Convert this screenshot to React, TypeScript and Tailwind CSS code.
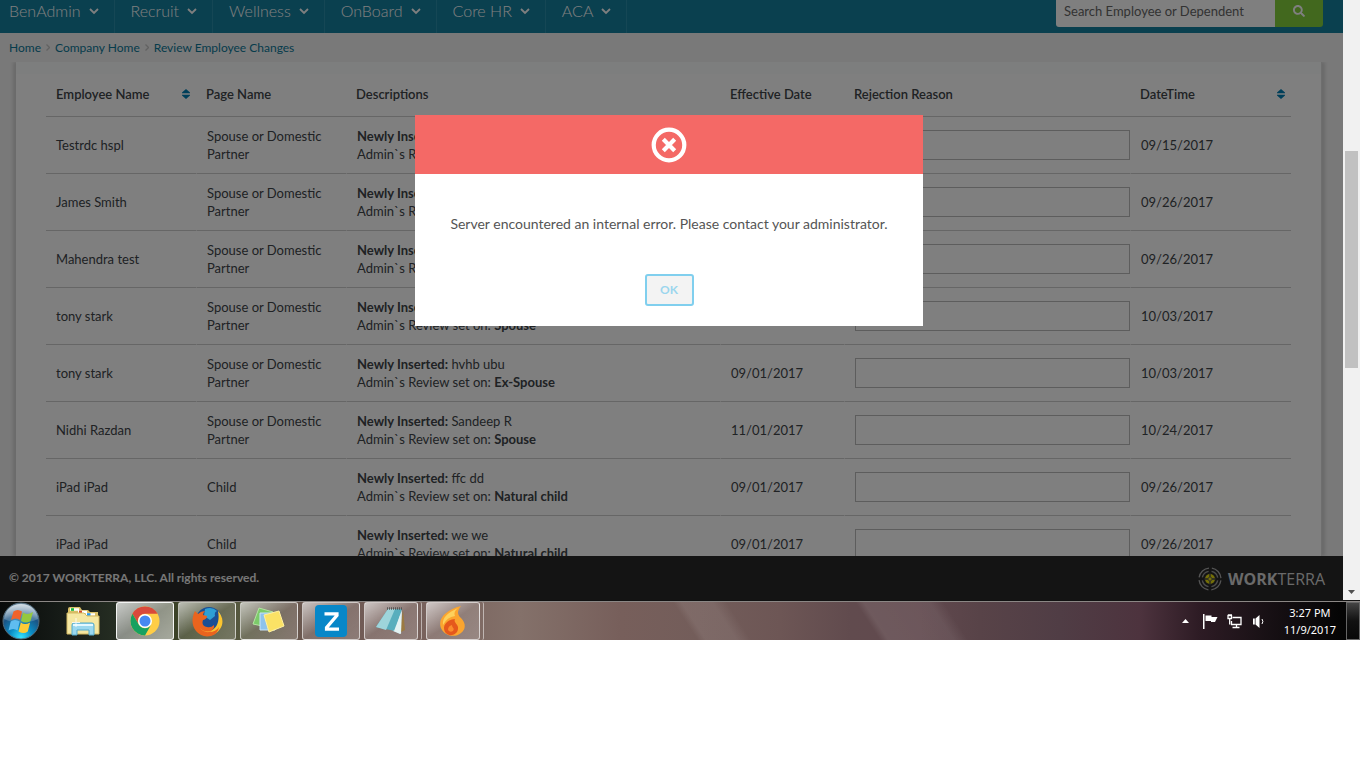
import React from "react";
import { FaSearch } from "react-icons/fa";

const NAV = ["BenAdmin", "Recruit", "Wellness", "OnBoard", "Core HR", "ACA"];

type Row = { name: string; page: string; item: string; relation: string; effective: string; date: string };

const SPOUSE = "Spouse or Domestic Partner";

const ROWS: Row[] = [
  { name: "Testrdc hspl", page: SPOUSE, item: "", relation: "Spouse", effective: "", date: "09/15/2017" },
  { name: "James Smith", page: SPOUSE, item: "", relation: "Spouse", effective: "", date: "09/26/2017" },
  { name: "Mahendra test", page: SPOUSE, item: "", relation: "Spouse", effective: "", date: "09/26/2017" },
  { name: "tony stark", page: SPOUSE, item: "", relation: "Spouse", effective: "", date: "10/03/2017" },
  { name: "tony stark", page: SPOUSE, item: "hvhb ubu", relation: "Ex-Spouse", effective: "09/01/2017", date: "10/03/2017" },
  { name: "Nidhi Razdan", page: SPOUSE, item: "Sandeep R", relation: "Spouse", effective: "11/01/2017", date: "10/24/2017" },
  { name: "iPad iPad", page: "Child", item: "ffc dd", relation: "Natural child", effective: "09/01/2017", date: "09/26/2017" },
  { name: "iPad iPad", page: "Child", item: "we we", relation: "Natural child", effective: "09/01/2017", date: "09/26/2017" },
];

function Chevron() {
  return (
    <svg className="mt-[2px]" width="10" height="7" viewBox="0 0 10 7" fill="none" stroke="currentColor" strokeWidth="1.8">
      <path d="M1 1l4 4 4-4" />
    </svg>
  );
}

function SortIcon() {
  return (
    <svg width="8" height="10" viewBox="0 0 8 10" fill="#007fb4">
      <path d="M4 0L8 3.400V4.300H0V3.400zM4 10L8 6.600V5.700H0V6.600z" />
    </svg>
  );
}

function Header() {
  return (
    <header className="flex h-[33px] justify-between bg-[#14809e] pr-5">
      <nav className="-ml-[7px] flex text-[16px] font-light text-white">
        {NAV.map((label) => (
          <a key={label} href="#" className="flex items-center gap-2 border-r border-[#2b8eaa] pr-[15px] pb-3 pl-4 leading-5">
            {label}
            <Chevron />
          </a>
        ))}
      </nav>
      <form className="flex h-[27px] overflow-hidden rounded-b-[3px]">
        <input
          aria-label="Search Employee or Dependent"
          placeholder="Search Employee or Dependent"
          className="w-[219px] bg-white px-2 pb-1 text-[13px] text-[#555] placeholder:text-[#666]"
        />
        <button type="button" aria-label="Search" className="flex w-12 items-center justify-center bg-[#84d03c] pb-[5px] text-white">
          <FaSearch size={12} />
        </button>
      </form>
    </header>
  );
}

function Breadcrumb() {
  return (
    <nav className="flex h-[29px] items-center gap-[5px] pl-[9px] text-[12px] text-[#0c7898]">
      <a href="#">Home</a>
      <Separator />
      <a href="#">Company Home</a>
      <Separator />
      <a href="#">Review Employee Changes</a>
    </nav>
  );
}

function Separator() {
  return (
    <svg width="4" height="7" viewBox="0 0 4 7" fill="none" stroke="#c4c4c4" strokeWidth="1.300">
      <path d="M.5 .5l3 3-3 3" />
    </svg>
  );
}

function Heading({ label, sortable }: { label: string; sortable?: boolean }) {
  return (
    <th className="h-[43px] border-b border-[#ccc] p-0 pr-[6px] pb-[2px] pl-[10px] text-left align-middle font-semibold">
      <div className="flex items-center justify-between">
        {label}
        {sortable && <SortIcon />}
      </div>
    </th>
  );
}

const CELL = "h-[57px] border-b border-b-[#ccc] border-l border-l-white py-0 pr-0 pl-[10px] align-middle";
const FIRST_CELL = "h-[57px] border-b border-b-[#ccc] py-0 pr-0 pl-[10px] align-middle";

function ChangesTable() {
  return (
    <table className="w-full table-fixed border-separate border-spacing-0 text-[13px] leading-[18px] text-[#404448]">
      <colgroup>
        <col className="w-[150px]" />
        <col className="w-[150px]" />
        <col />
        <col className="w-[124px]" />
        <col className="w-[286px]" />
        <col className="w-[161px]" />
      </colgroup>
      <thead>
        <tr>
          <Heading label="Employee Name" sortable />
          <Heading label="Page Name" />
          <Heading label="Descriptions" />
          <Heading label="Effective Date" />
          <Heading label="Rejection Reason" />
          <Heading label="DateTime" sortable />
        </tr>
      </thead>
      <tbody>
        {ROWS.map((row, i) => (
          <tr key={i}>
            <td className={FIRST_CELL}>{row.name}</td>
            <td className={CELL}>{row.page}</td>
            <td className={CELL}>
              <b className="font-bold">Newly Inserted:</b> {row.item}
              <br />
              Admin`s Review set on: <b className="font-bold">{row.relation}</b>
            </td>
            <td className={CELL}>{row.effective}</td>
            <td className={CELL}>
              <input aria-label={"Rejection reason for " + row.name} className="block h-[30px] w-full border border-[#bbb] bg-white px-2" />
            </td>
            <td className={CELL}>{row.date}</td>
          </tr>
        ))}
      </tbody>
    </table>
  );
}

function Footer() {
  return (
    <footer className="flex h-11 items-center justify-between bg-[#282828] pr-[18px] pl-[9px] text-[#eee]">
      <p className="text-[12px] font-bold">© 2017 WORKTERRA, LLC. All rights reserved.</p>
      <div className="flex items-center gap-[6px] pt-[2px] font-['Open_Sans',sans-serif] text-[16px] text-[#d4d4d4]">
        <svg width="24" height="24" viewBox="0 0 24 24" fill="none">
          <circle cx="12" cy="12" r="11" stroke="#aaa" strokeWidth="1.300" strokeDasharray="14.300 3" strokeDashoffset="-1.500" />
          <circle cx="12" cy="12" r="7.800" stroke="#999" strokeWidth="1.400" strokeDasharray="9.200 3" strokeDashoffset="-1.500" />
          <circle cx="12" cy="12" r="5" fill="#e6dc10" />
          <path d="M12 6v12M6 12h12" stroke="#444" strokeWidth="1.300" />
          <circle cx="12" cy="12" r="2" fill="#e6dc10" stroke="#555" strokeWidth=".8" />
        </svg>
        <span>
          <b className="font-bold">WORK</b>TERRA
        </span>
      </div>
    </footer>
  );
}

function ErrorDialog() {
  return (
    <div className="absolute inset-0 flex items-start justify-center bg-black/50 pt-[115px] pr-[5px]">
      <div role="alertdialog" aria-label="Error" className="w-[508px] bg-white">
        <div className="flex h-[59px] items-center justify-center bg-[#f46966]">
          <svg width="36" height="36" viewBox="0 0 36 36" fill="none" stroke="#fff">
            <circle cx="18" cy="18" r="15.300" strokeWidth="4.200" />
            <path d="M12.300 12.300l11.400 11.400M23.700 12.300L12.300 23.700" strokeWidth="4.200" />
          </svg>
        </div>
        <div className="flex flex-col items-center gap-10 pt-10 pb-5">
          <p className="text-[14px] leading-5 text-[#555]">Server encountered an internal error. Please contact your administrator.</p>
          <button type="button" className="h-8 w-[49px] rounded-[3px] border-2 border-[#80cfee] bg-[#f3f3f3] text-[12px] font-bold text-[#9bd6ee]">
            OK
          </button>
        </div>
      </div>
    </div>
  );
}

function Scrollbar() {
  return (
    <div className="flex w-[17px] shrink-0 flex-col items-center justify-between bg-[#f1f1f1] pt-[151px] pb-[6px]">
      <div className="h-[217px] w-[13px] bg-[#c1c1c1]" />
      <svg width="7" height="4" viewBox="0 0 7 4" fill="#505050">
        <path d="M0 0h7L3.500 4z" />
      </svg>
    </div>
  );
}

function StartOrb() {
  return (
    <svg width="40" height="38" viewBox="0 0 40 38">
      <defs>
        <radialGradient id="orb" cx=".5" cy=".95" r=".9">
          <stop offset="0" stopColor="#35e2ff" />
          <stop offset=".35" stopColor="#0b8cc4" />
          <stop offset=".7" stopColor="#1b5484" />
          <stop offset="1" stopColor="#7f9db4" />
        </radialGradient>
        <linearGradient id="gloss" x2="0" y2="1">
          <stop offset="0" stopColor="#fff" stopOpacity=".65" />
          <stop offset="1" stopColor="#fff" stopOpacity=".12" />
        </linearGradient>
      </defs>
      <circle cx="21" cy="19" r="18" fill="url(#orb)" stroke="#526b7b" />
      <path d="M4 17C5 7 13 2 21 2s16 5 17 15c-11 5-23 5-34 0z" fill="url(#gloss)" />
      <path d="M13.500 9.500q4-3 8.500 0l-2 8.500q-4-3-9 0z" fill="#f0622a" />
      <path d="M23 10.500q4 3 10-.5l-2.500 9q-4 3-9.500 0z" fill="#95c83e" />
      <path d="M10.700 19.500q4-3 9 0l-2.200 9q-4-3-9 0z" fill="#5fbdf0" />
      <path d="M20.800 20.500q4 3 9.300 0l-2.300 9q-4 3-9.300 0z" fill="#fccb36" />
    </svg>
  );
}

function FolderIcon() {
  return (
    <svg width="34" height="30" viewBox="0 0 34 30">
      <path d="M2 27V3q0-2 2-2h10l2 3h6l2 2h8v21z" fill="#d9bf67" />
      <path d="M4 3.500h9M12 6h9M20 8.500h9" stroke="#fff" strokeWidth="2.600" />
      <path d="M5 3.500h3" stroke="#17b83d" strokeWidth="2.600" />
      <path d="M13 6h3" stroke="#d44a2b" strokeWidth="2.600" />
      <path d="M21 8.500h3.500" stroke="#249ae8" strokeWidth="2.600" />
      <path d="M1 7h17l3 3h12v18H1z" fill="#f5e7a2" stroke="#d3b962" />
      <path d="M6 29V19q0-2 2-2h18q2 0 2 2v10h-5v-5H11v5z" fill="#9bd8ef" stroke="#55aacb" />
      <path d="M7 19h20" stroke="#e3f8ff" strokeWidth="2" />
      <path d="M10 12v9M6 16.500h8" stroke="#fff" opacity=".8" />
    </svg>
  );
}

function ChromeIcon() {
  return (
    <svg width="30" height="30" viewBox="0 0 30 30">
      <circle cx="15" cy="15" r="14.500" fill="#ffcd46" />
      <path d="M2.400 7.800A14.500 14.500 0 0 1 27.600 7.800H15a7.200 7.200 0 0 0-6.200 10.800z" fill="#d9493b" />
      <path d="M2.400 7.800A14.500 14.500 0 0 0 15 29.500l6.200-10.900a7.200 7.200 0 0 1-12.400 0z" fill="#17a160" />
      <circle cx="15" cy="15" r="7" fill="#fff" />
      <circle cx="15" cy="15" r="5.500" fill="#4688f1" />
    </svg>
  );
}

function FirefoxIcon() {
  return (
    <svg width="31" height="31" viewBox="0 0 31 31">
      <circle cx="17" cy="14" r="13" fill="#1b4f94" />
      <path d="M13 3q7-3 12 2-3 1-2 5l-5 4-6-4z" fill="#2e9fd4" />
      <path d="M26 5c5 5 6 13 2 18-4 6-11 8-17 6l7-4c7-2 10-10 8-20z" fill="#fbc530" />
      <path d="M3 5l3 3q3-3 7-3-2 2-2 4l4 1q0 3-4 4-2 6 4 7 4 1 7-2 1 5-5 7 7 0 10-5-1 7-8 9-9 2-15-5C-1 18 0 11 3 5z" fill="#ea641e" />
      <path d="M6 20q6 8 15 4-7 6-15-4z" fill="#f7992c" />
    </svg>
  );
}

function NotesIcon() {
  return (
    <svg width="34" height="28" viewBox="0 0 34 28">
      <path d="M7 1l14 4-6 15L1 17z" fill="#7cca6a" stroke="#b4e4a2" />
      <path d="M8 6h15v17H8z" fill="#8fc3ec" stroke="#c9e4fa" />
      <path d="M12 8l15-4 5 15-15 6z" fill="#fbe265" stroke="#fff0a0" />
    </svg>
  );
}

function ZIcon() {
  return (
    <svg width="32" height="32" viewBox="0 0 32 32">
      <rect width="32" height="32" rx="4" fill="#0787c8" />
      <path d="M9.500 8.800h12.500v1.600L11.500 22.600v1.600H24" fill="none" stroke="#fff" strokeWidth="3.200" />
    </svg>
  );
}

function NotepadIcon() {
  return (
    <svg width="32" height="30" viewBox="0 0 32 30">
      <path d="M28 4l2 20-6 3z" fill="#9b7a42" />
      <path d="M13 3h13l-1 25-7-3z" fill="#cfe9ee" />
      <path d="M13 3h14l-7 22-19-4z" fill="#58aebd" />
      <path d="M13 3h7l-9 21-10-3z" fill="#9ed5db" />
      <path d="M27 4l-1 24-7-3z" fill="#e3f2f2" />
      <path d="M12 2.500h16" stroke="#555" strokeWidth="2.500" strokeDasharray="1 1" />
    </svg>
  );
}

function FlameIcon() {
  return (
    <svg width="28" height="32" viewBox="0 0 28 32">
      <path d="M22 1c-4 5-4 8 0 12 5 5 5 11 0 15-6 5-15 3-19-3C-3 15 6 5 22 1z" fill="#fba52f" />
      <path d="M19 3C8 8 3 13 4 20q4-8 12-9-2-4 3-8z" fill="#fdd15c" />
      <path d="M16 14c-2 4 4 5 3 10-1 7-10 8-13 3-3-6 1-12 10-13z" fill="#e5581c" />
      <path d="M13 20c0 3 3 3 1 6q-3 2-5-1 0-4 4-5z" fill="#fa8b2d" />
    </svg>
  );
}

function Task({ label, active, stacked, children }: { label: string; active?: boolean; stacked?: boolean; children: React.ReactNode }) {
  return (
    <div className={stacked ? "flex w-[58px] rounded-[2px] border-r border-white/50 pr-[3px]" : "flex w-[58px]"}>
      <button
        type="button"
        aria-label={label}
        className={
          "flex flex-1 items-center justify-center rounded-[3px] border bg-linear-to-br " +
          (active ? "border-white/90 from-white/75 via-white/45 to-white/55" : "border-white/60 from-white/65 via-white/15 to-white/20")
        }
      >
        {children}
      </button>
    </div>
  );
}

function Tray() {
  return (
    <div className="flex items-center text-white">
      <svg width="7" height="4" viewBox="0 0 7 4" fill="#fff">
        <path d="M0 4h7L3.500 0z" />
      </svg>
      <svg className="ml-[14px]" width="15" height="15" viewBox="0 0 15 15" fill="#fff">
        <path d="M0 0h1.500v15H0zM2.500 1.500h6v1.500h6L13 6l-1 2H8V7H2.500z" />
      </svg>
      <svg className="ml-[9px]" width="15" height="15" viewBox="0 0 15 15" fill="none" stroke="#fff" strokeWidth="1.300">
        <path d="M5.500 3.500H14v7H4.500V7M9.500 10.500v3M5.500 13.500h7" />
        <path d="M1 1v3.500h3.500V1M2.700 4.500v6M2 0v1.500M4 0v1.500M.5 1.500h4.500" />
      </svg>
      <svg className="ml-[11px]" width="13" height="15" viewBox="0 0 13 15" fill="#fff">
        <path d="M0 4.500h1.800v6H0zM2.500 4.500L6.500 1v13l-4-3.500z" />
        <path d="M9 5q1.800 2.500 0 5" stroke="#fff" fill="none" />
      </svg>
      <div className="ml-[18px] text-center font-['Noto_Sans',sans-serif] text-[11px] leading-[17px]">
        <div>3:27 PM</div>
        <div>11/9/2017</div>
      </div>
      <div className="ml-[10px] h-[38px] w-[14px] border border-[#666] bg-linear-to-b from-[#444] via-[#111] to-[#080808]" />
    </div>
  );
}

function Taskbar() {
  return (
    <div className="flex h-10 justify-between border-t border-[#111] bg-[linear-gradient(57deg,transparent_585px,#ffffff14_592px,#ffffff14_618px,transparent_630px,transparent_738px,#ffffff16_745px,#ffffff12_800px,transparent_812px),linear-gradient(90deg,#080a0a_0px,#161b17_60px,#252d22_115px,#414729_190px,#56583f_240px,#6b5750_305px,#755e59_400px,#84716a_520px,#775f5b_620px,#735d5a_700px,#6d5655_780px,#614b4e_850px,#61494e_920px,#584348_980px,#503d45_1060px,#4d333e_1140px,#2d1b24_1200px,#171014_1270px,#050505_1340px)]">
      <div className="flex w-full justify-between border-t border-[#8b8785]">
        <div className="flex">
          <button type="button" aria-label="Start">
            <StartOrb />
          </button>
          <button type="button" aria-label="Explorer" className="mr-[16px] ml-[26px]">
            <FolderIcon />
          </button>
          <div className="flex gap-1">
            <Task label="Chrome" active>
              <ChromeIcon />
            </Task>
            <Task label="Firefox">
              <FirefoxIcon />
            </Task>
            <Task label="Sticky Notes">
              <NotesIcon />
            </Task>
            <Task label="Z">
              <ZIcon />
            </Task>
            <Task label="Notepad" stacked>
              <NotepadIcon />
            </Task>
            <Task label="Flame" stacked>
              <FlameIcon />
            </Task>
          </div>
        </div>
        <Tray />
      </div>
    </div>
  );
}

export default function App() {
  return (
    <div className="min-h-screen bg-white pr-[6px] font-[Lato,sans-serif]">
      <div className="flex h-[600px]">
        <div className="relative flex min-w-0 flex-1 flex-col bg-[#f2f2f2]">
          <Header />
          <Breadcrumb />
          <main className="mr-[21px] ml-4 min-h-0 flex-1 overflow-hidden border-r border-[#ddd] bg-white shadow-[-3px_0_3px_#d4d4d4,3px_0_3px_#d4d4d4] [clip-path:inset(0_-8px)]">
            <div className="h-3 bg-[#fafdfd]" />
            <div className="pr-[30px] pl-[30px]">
              <ChangesTable />
            </div>
          </main>
          <Footer />
          <ErrorDialog />
        </div>
        <Scrollbar />
      </div>
      <Taskbar />
    </div>
  );
}
